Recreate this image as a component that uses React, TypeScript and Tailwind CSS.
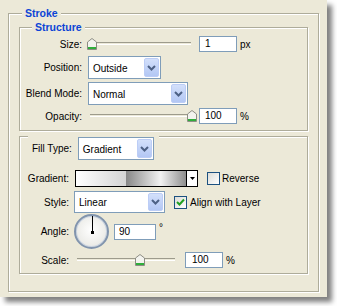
import React from 'react'

const font = { fontFamily: '"Liberation Sans", Arial, sans-serif' }

const etched = 'border border-[#aeac9a] shadow-[1px_1px_0_#fff,inset_1px_1px_0_#fff]'

function Thumb() {
  return (
    <svg width="10" height="12" viewBox="0 0 10 12">
      <path d="M0.5 4 L5 0.5 L9.5 4 L9.5 11.5 L0.5 11.5 Z" fill="#f3f3ee" stroke="#8d8d84" />
      <rect x="1" y="9" width="8" height="2" fill="#2fae3b" />
    </svg>
  )
}

function Slider({ width, pos }: { width: number; pos: number }) {
  return (
    <div className="relative h-[16px]" style={{ width }}>
      <div className="absolute left-[3px] right-[6px] top-[6px] h-[3px] border-t border-[#9d9b8c] border-b border-b-white" />
      <div className="absolute top-[2px]" style={{ left: pos }}>
        <Thumb />
      </div>
    </div>
  )
}

function NumberBox({ value, w, pl = 'pl-[5px]' }: { value: string; w: string; pl?: string }) {
  return (
    <div className={`${w} ${pl} h-[16px] border border-[#7f9db9] bg-white text-[10px] leading-[14px] text-black`}>
      {value}
    </div>
  )
}

function Chevron() {
  return (
    <svg width="9" height="6" viewBox="0 0 9 6">
      <path d="M1 1 L4.5 4.5 L8 1" fill="none" stroke="#4d6185" strokeWidth="2" />
    </svg>
  )
}

function Select({ value, w, h = 'h-[23px]' }: { value: string; w: string; h?: string }) {
  return (
    <div className={`${w} ${h} flex items-center justify-between border border-[#7f9db9] bg-white p-px`}>
      <span className="pl-[3px] pt-px text-[10px] text-black">{value}</span>
      <div className="flex h-full w-[15px] items-center justify-center rounded-[2px] border border-[#bccdf6] bg-gradient-to-b from-[#d3e0fb] to-[#b3c7f4]">
        <Chevron />
      </div>
    </div>
  )
}

function Checkbox({ checked }: { checked?: boolean }) {
  return (
    <div className="flex h-[13px] w-[13px] items-center justify-center border border-[#1c5180] bg-gradient-to-br from-[#dcdcd7] to-white">
      {checked && (
        <svg width="9" height="9" viewBox="0 0 9 9">
          <path d="M1 4 L3.5 6.5 L8 1.5" fill="none" stroke="#21a121" strokeWidth="2" />
        </svg>
      )}
    </div>
  )
}

function Dial() {
  return (
    <div className="relative h-[35px] w-[35px] rounded-full border-2 border-[#8194ad] bg-[radial-gradient(circle_at_50%_45%,#ffffff,#e2e2dc)] shadow-[inset_0_0_0_1px_#c9d3e0]">
      <div className="absolute left-[15.5px] top-0 h-[16px] w-px bg-black" />
      <div className="absolute left-[14.5px] top-[14.5px] h-[3px] w-[3px] bg-black" />
    </div>
  )
}

export default function App() {
  return (
    <div className="h-[306px] w-[337px] bg-white" style={font}>
      <div className="h-[297px] w-[327px] bg-[#ece9d8] pl-[8px] pt-[13px] shadow-[5px_5px_5px_rgba(0,0,0,0.5)]">
        {/* Stroke */}
        <div className={`${etched} w-[311px] pb-[17px]`}>
          <div className="-mt-[7px] ml-[13px] flex h-[13px] w-fit items-center bg-[#ece9d8] px-[3px] text-[10.5px] font-bold text-[#0b44d6]">
            Stroke
          </div>

          {/* Structure */}
          <div className={`${etched} mx-[10px] mt-[7px] pb-[6px]`}>
            <div className="-mt-[7px] ml-[12px] flex h-[13px] w-fit items-center bg-[#ece9d8] px-[3px] text-[10.5px] font-bold text-[#0b44d6]">
              Structure
            </div>

            <div className="mt-[2px] flex h-[16px] items-center text-[10px] text-black">
              <span className="w-[62px] text-right">Size:</span>
              <div className="ml-[5px]">
                <Slider width={110} pos={0} />
              </div>
              <div className="ml-[2px]">
                <NumberBox value="1" w="w-[38px]" />
              </div>
              <span className="ml-[3px]">px</span>
            </div>

            <div className="mt-[4px] flex h-[23px] items-center text-[10px] text-black">
              <span className="w-[62px] text-right">Position:</span>
              <div className="ml-[6px]">
                <Select value="Outside" w="w-[73px]" />
              </div>
            </div>

            <div className="mt-[3px] flex h-[23px] items-center text-[10px] text-black">
              <span className="w-[62px] text-right">Blend Mode:</span>
              <div className="ml-[6px]">
                <Select value="Normal" w="w-[100px]" />
              </div>
            </div>

            <div className="mt-[3px] flex h-[16px] items-center text-[10px] text-black">
              <span className="w-[62px] text-right">Opacity:</span>
              <div className="ml-[5px]">
                <Slider width={110} pos={100} />
              </div>
              <div className="ml-[2px]">
                <NumberBox value="100" w="w-[38px]" />
              </div>
              <span className="ml-[3px]">%</span>
            </div>
          </div>

          {/* Fill */}
          <div className={`${etched} mx-[10px] mt-[5px] pb-[5px]`}>
            <div className="-mt-px ml-[8px] flex h-[25px] w-fit items-center bg-[#ece9d8] pl-[4px] pr-[5px] text-[10px] text-black">
              <span>Fill Type:</span>
              <div className="ml-[6px]">
                <Select value="Gradient" w="w-[76px]" />
              </div>
            </div>

            <div className="mt-[9px] flex h-[17px] items-center text-[10px] text-black">
              <span className="w-[49px] text-right">Gradient:</span>
              <div className="ml-[6px] flex h-[17px] border border-black">
                <div className="h-full w-[110px] bg-[linear-gradient(to_right,#ffffff_0%,#d4d4d4_45%,#858585_45%,#f2f2f2_77%,#8e8e8e_100%)]" />
                <div className="flex h-full w-[11px] items-center justify-center border-l border-black bg-white">
                  <svg width="5" height="3" viewBox="0 0 5 3">
                    <path d="M0 0 L5 0 L2.5 3 Z" fill="#000" />
                  </svg>
                </div>
              </div>
              <div className="ml-[9px]">
                <Checkbox />
              </div>
              <span className="ml-[2px]">Reverse</span>
            </div>

            <div className="mt-[4px] flex h-[22px] items-center text-[10px] text-black">
              <span className="w-[49px] text-right">Style:</span>
              <div className="ml-[5px]">
                <Select value="Linear" w="w-[91px]" h="h-[22px]" />
              </div>
              <div className="ml-[9px]">
                <Checkbox checked />
              </div>
              <span className="ml-[3px]">Align with Layer</span>
            </div>

            <div className="mt-px flex h-[35px] items-center text-[10px] text-black">
              <span className="w-[49px] text-right">Angle:</span>
              <div className="ml-[5px]">
                <Dial />
              </div>
              <div className="ml-[5px]">
                <NumberBox value="90" w="w-[42px]" pl="pl-[4px]" />
              </div>
              <span className="mb-[8px] ml-[3px]">°</span>
            </div>

            <div className="mt-[3px] flex h-[16px] items-center text-[10px] text-black">
              <span className="w-[49px] text-right">Scale:</span>
              <div className="ml-[5px]">
                <Slider width={107} pos={61} />
              </div>
              <div className="ml-[4px]">
                <NumberBox value="100" w="w-[38px]" pl="pl-[6px]" />
              </div>
              <span className="ml-[3px]">%</span>
            </div>
          </div>
        </div>
      </div>
    </div>
  )
}
